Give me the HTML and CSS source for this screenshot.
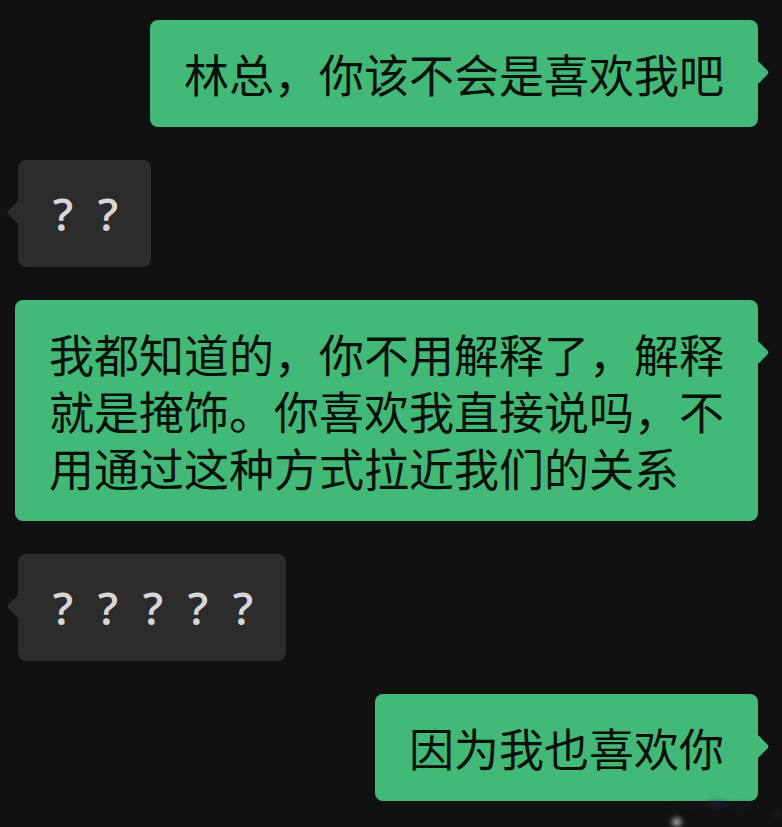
FILE: index.html
```html
<!DOCTYPE html>
<html lang="zh-CN">
<head>
  <meta charset="UTF-8" />
  <meta name="viewport" content="width=device-width, initial-scale=1.0" />
  <title>聊天记录</title>
  <link rel="stylesheet" href="styles.css">
</head>
<body>
  <div class="chat">
    <div class="msg mine">
      <div class="bubble">林总，你该不会是喜欢我吧</div>
    </div>

    <div class="msg theirs">
      <div class="bubble qs"><span>?</span><span>?</span></div>
    </div>

    <div class="msg mine">
      <div class="bubble">我都知道的，你不用解释了，解释就是掩饰。你喜欢我直接说吗，不用通过这种方式拉近我们的关系</div>
    </div>

    <div class="msg theirs">
      <div class="bubble qs"><span>?</span><span>?</span><span>?</span><span>?</span><span>?</span></div>
    </div>

    <div class="msg mine">
      <div class="bubble">因为我也喜欢你</div>
    </div>
  </div>

  <!-- blurred watermark in the corner -->
  <div class="mark"></div>
</body>
</html>
```

FILE: styles.css
```css
* { margin: 0; padding: 0; box-sizing: border-box; }
html, body { height: 100%; }
body { background: #111111; font-family: "Noto Sans CJK SC", "Noto Sans", sans-serif; overflow: hidden; }

.chat { display: flex; flex-direction: column; gap: 33px; padding: 20px 24px 0 15px; }
.msg { display: flex; }
.msg.mine { justify-content: flex-end; }
.msg.theirs { justify-content: flex-start; padding-left: 3px; }

.bubble {
  position: relative; max-width: 100%;
  padding: 25px 34px 25px 34px; border-radius: 8px;
  font-size: 45px; line-height: 57px;
}
.mine .bubble { background: #42b977; color: #071009; }
.theirs .bubble { background: #2c2c2c; color: #d6d6d6; }

/* tails */
.bubble::after {
  content: ""; position: absolute; top: 44px;
  width: 17px; height: 17px; border-radius: 3px; transform: rotate(45deg);
}
.mine .bubble::after { right: -8px; background: #42b977; }
.theirs .bubble::after { left: -8px; background: #2c2c2c; }

/* question marks */
.qs { display: flex; gap: 23px; padding: 25px 32px 25px 34px; font-family: "Open Sans", sans-serif; font-weight: 600; }
.qs span { width: 22px; text-align: center; }

.mark {
  position: absolute; right: 0; bottom: 0; width: 135px; height: 32px;
  background:
    radial-gradient(circle at 22% 85%, rgba(230,230,230,0.9) 0, rgba(230,230,230,0) 7px),
    radial-gradient(ellipse at 30% 40%, #151515 0, rgba(21,21,21,0) 18px),
    radial-gradient(ellipse at 52% 30%, #241f3a 0, rgba(36,31,58,0) 16px),
    radial-gradient(ellipse at 70% 35%, #181818 0, rgba(24,24,24,0) 18px),
    radial-gradient(ellipse at 96% 60%, rgba(150,150,150,0.6) 0, rgba(150,150,150,0) 6px);
  filter: blur(2px);
}
```
